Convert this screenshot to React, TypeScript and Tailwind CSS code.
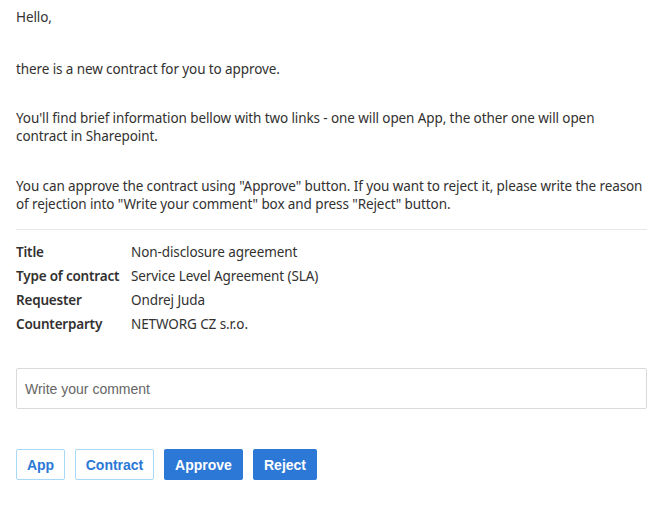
import React from "react";

const rows: [string, string][] = [
  ["Title", "Non-disclosure agreement"],
  ["Type of contract", "Service Level Agreement (SLA)"],
  ["Requester", "Ondrej Juda"],
  ["Counterparty", "NETWORG CZ s.r.o."],
];

export default function App() {
  return (
    <div className="w-[670px] h-[507px] bg-white pl-4 pr-[23px] text-[13.5px] tracking-[-0.1px] leading-[18px] text-[#323130]" style={{ fontFamily: '"Segoe UI", "Noto Sans", sans-serif' }}>
      <p className="pt-[8px]">Hello,</p>
      <p className="mt-[34px]">there is a new contract for you to approve.</p>
      <p className="mt-[31px]">You'll find brief information bellow with two links - one will open App, the other one will open contract in Sharepoint.</p>
      <p className="mt-[32px]">You can approve the contract using "Approve" button. If you want to reject it, please write the reason of rejection into "Write your comment" box and press "Reject" button.</p>
      <div className="mt-[16px] h-px bg-[#e8e8e8]" />
      <div className="mt-[13px] grid grid-cols-[115px_1fr] gap-y-[6px]">
        {rows.map(([k, v]) => (
          <React.Fragment key={k}>
            <div className="font-semibold tracking-[-0.2px]">{k}</div>
            <div>{v}</div>
          </React.Fragment>
        ))}
      </div>
      <div className="mt-[35px] h-[41px] border border-[#dadada] rounded-[2px] flex items-center px-2 text-[14px] tracking-normal text-[#666]" style={{ fontFamily: '"Liberation Sans", Arial, sans-serif' }}>
        Write your comment
      </div>
      <div className="mt-[40px] flex gap-[10px] font-bold text-[14px] tracking-normal" style={{ fontFamily: '"Liberation Sans", Arial, sans-serif' }}>
        <button className="h-[31px] w-[49px] border border-[#a8d8f8] rounded-[2px] text-[#2b78d6] bg-white">App</button>
        <button className="h-[31px] w-[79px] border border-[#a8d8f8] rounded-[2px] text-[#2b78d6] bg-white">Contract</button>
        <button className="h-[31px] w-[79px] rounded-[2px] text-white bg-[#2b78d6]">Approve</button>
        <button className="h-[31px] w-[64px] rounded-[2px] text-white bg-[#2b78d6]">Reject</button>
      </div>
    </div>
  );
}
